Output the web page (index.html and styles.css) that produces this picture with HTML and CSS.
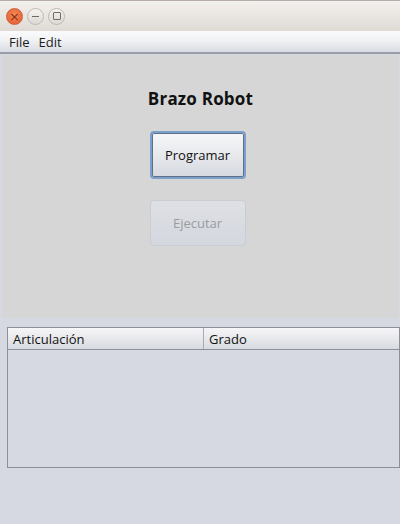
FILE: index.html
```html
<!DOCTYPE html>
<html>
<head>
<meta charset="utf-8">
<link rel="stylesheet" href="styles.css">
</head>
<body>
<div class="window">
  <div class="titlebar">
    <span class="wbtn close">×</span>
    <span class="wbtn min"></span>
    <span class="wbtn max"></span>
  </div>
  <div class="menubar">
    <span class="menu">File</span>
    <span class="menu">Edit</span>
  </div>
  <div class="content">
    <div class="panel">
      <h1 class="title">Brazo Robot</h1>
      <button class="btn primary">Programar</button>
      <button class="btn disabled">Ejecutar</button>
    </div>
    <div class="table">
      <div class="thead">
        <div class="th first">Articulación</div>
        <div class="th">Grado</div>
      </div>
      <div class="tbody"></div>
    </div>
  </div>
</div>
</body>
</html>
```
FILE: styles.css
```css
html, body { margin: 0; padding: 0; }
body {
  width: 400px; height: 524px; overflow: hidden;
  background: #d6d9e1;
  font-family: "Open Sans", "DejaVu Sans", sans-serif;
}
.window { display: flex; flex-direction: column; height: 524px; }
.titlebar {
  height: 30px;
  border-top: 1px solid #b4aea6;
  background: linear-gradient(#f3f1ee, #dfdad4);
  display: flex; align-items: center; gap: 4px;
  padding-left: 6px;
}
.wbtn {
  width: 15px; height: 15px; border-radius: 50%;
  border: 1px solid #bdb8b1;
  background: linear-gradient(#f6f4f2, #dcd8d2);
  display: flex; align-items: center; justify-content: center;
  box-sizing: content-box;
}
.close {
  background: radial-gradient(circle at 50% 40%, #f58a5c, #e3582a);
  border-color: #c9623a;
  color: #8a2e10; font-size: 13px; line-height: 1; font-family: "DejaVu Sans", sans-serif;
}
.min::after { content: ""; width: 7px; height: 1px; background: #6e6a65; }
.max::after { content: ""; width: 6px; height: 6px; border: 1px solid #6e6a65; border-radius: 1px; }
.menubar {
  height: 21px;
  background: linear-gradient(#fbfbfc, #f2f3f5 40%, #d9dce4);
  border-bottom: 2px solid #9a9ca6;
  display: flex; align-items: center; gap: 9px;
  padding-left: 9px;
  font-size: 13px; color: #1b1b1b;
}
.content { flex: 1; display: flex; flex-direction: column; padding-top: 1px; }
.panel {
  margin-left: 2px; margin-right: 1px;
  height: 263px;
  background: #d6d6d6;
  display: flex; flex-direction: column; align-items: center;
  box-sizing: border-box;
  padding-top: 34px;
}
.title {
  margin: 0; font-size: 17px; font-weight: bold; color: #111;
  line-height: 20px; height: 20px; letter-spacing: 0.2px;
}
.btn {
  width: 96px; font-family: inherit; font-size: 13px;
  border-radius: 4px; box-sizing: border-box;
  margin-right: 6px;
}
.primary {
  margin-top: 22px; height: 48px;
  border: 2px solid #7aa0cb;
  box-shadow: inset 0 0 0 1px #5f6f86;
  background: linear-gradient(#f7f7f9, #e4e6ea 60%, #d4d8e0);
  color: #111;
}
.disabled {
  margin-top: 21px; height: 46px;
  border: 1px solid #c9ccd3;
  background: linear-gradient(#dee0e5, #d4d7de);
  color: #9a9ba1;
}
.table {
  margin: 9px 0 0 7px;
  height: 141px;
  border: 1px solid #8e9098;
  box-sizing: border-box;
  display: flex; flex-direction: column;
}
.thead {
  height: 22px; display: flex;
  background: linear-gradient(#f6f6f8, #e6e7eb 55%, #d8dbe2);
  border-bottom: 1px solid #8e9098;
  box-sizing: border-box;
}
.th {
  font-size: 13px; color: #111; padding-left: 5px;
  display: flex; align-items: center; flex: 1;
  box-sizing: border-box;
}
.th.first { flex: 0 0 196px; border-right: 1px solid #a9abb3; }
.tbody { flex: 1; background: #d6d9e1; }
```
